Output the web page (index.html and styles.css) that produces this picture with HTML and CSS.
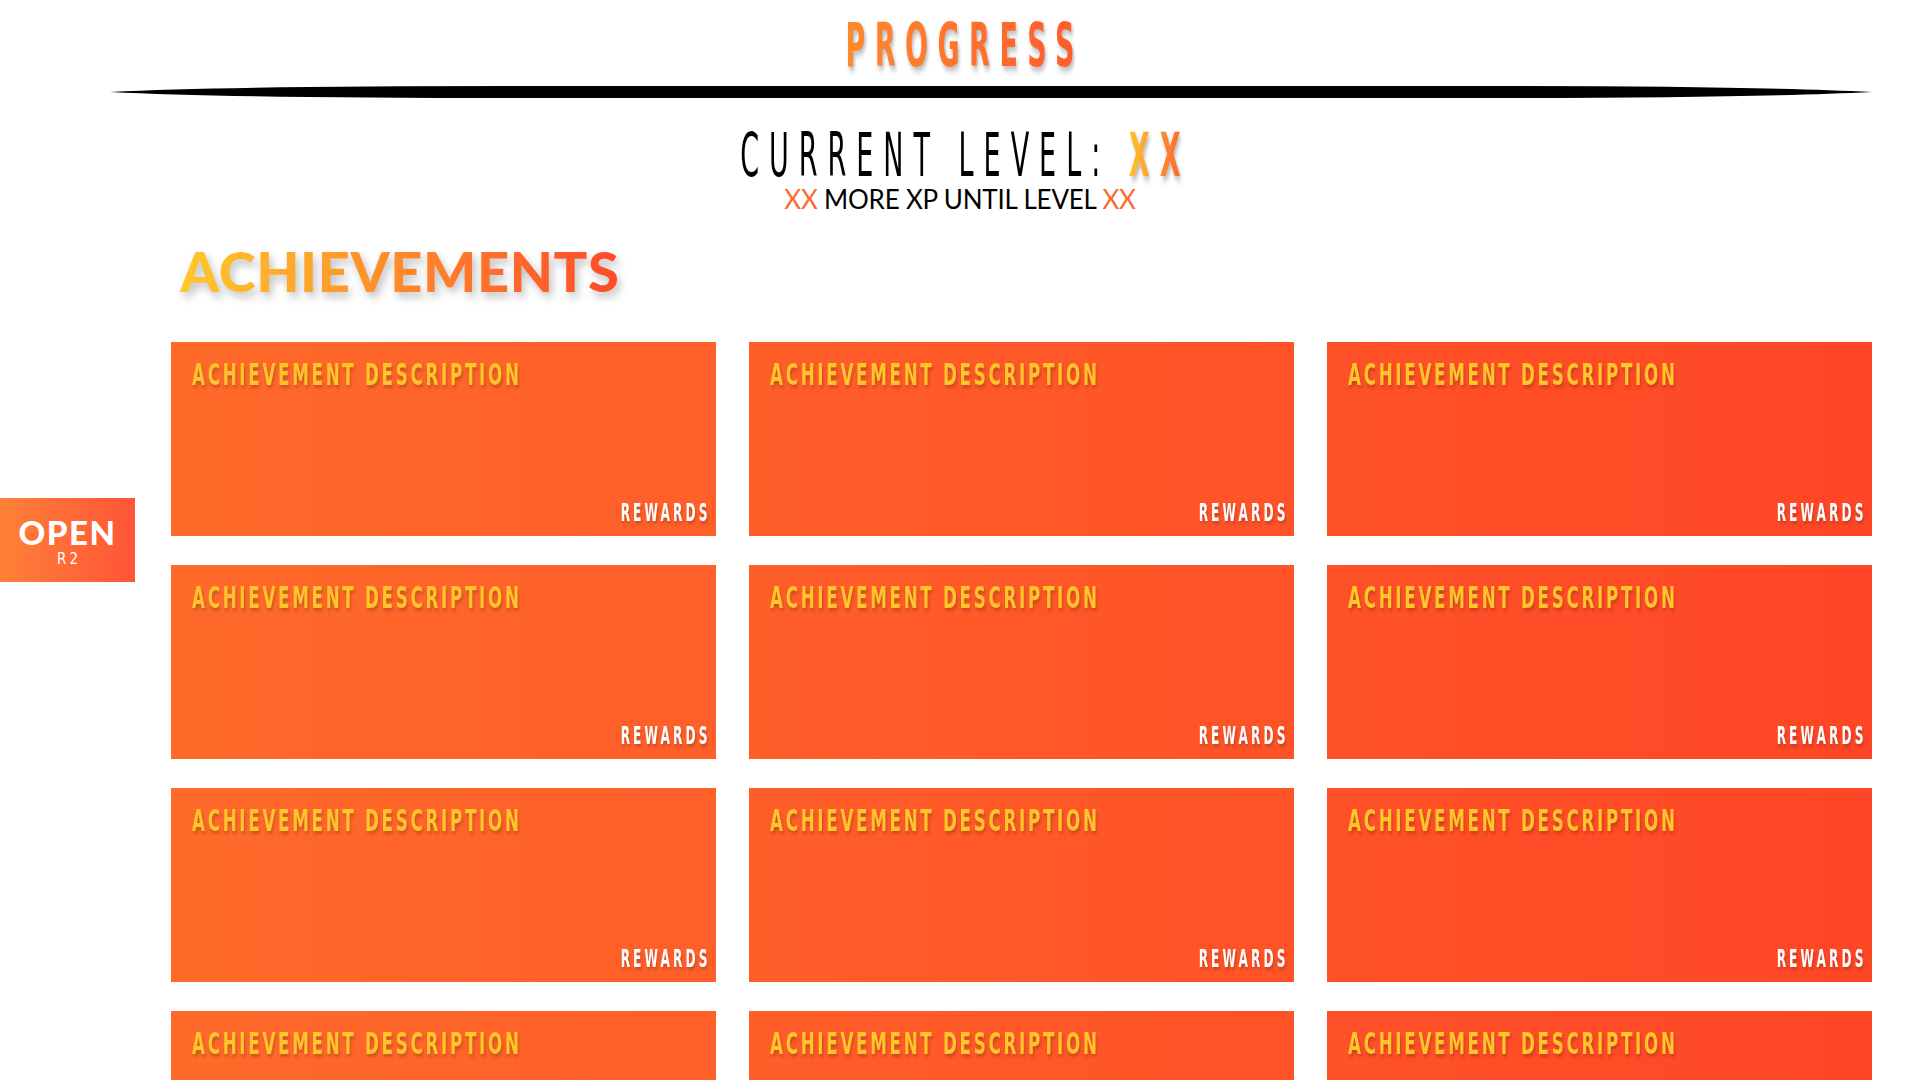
FILE: index.html
```html
<!DOCTYPE html>
<html lang="en">
<head>
<meta charset="utf-8">
<title>Progress</title>
<link rel="stylesheet" href="styles.css">
</head>
<body>
<header class="top">
  <h1 class="title"><span class="title-text">PROGRESS</span></h1>
  <div class="rule">
    <svg class="rule-svg" width="1762" height="12" viewBox="0 0 1762 12" preserveAspectRatio="none">
      <path d="M0 6 Q120 0 400 0 L1362 0 Q1642 0 1762 6 Q1642 12 1362 12 L400 12 Q120 12 0 6 Z" fill="#000"/>
    </svg>
  </div>
  <div class="level"><span class="level-text">CURRENT LEVEL: <span class="level-num">XX</span></span></div>
  <p class="xp"><span class="hl">XX</span> MORE XP UNTIL LEVEL <span class="hl">XX</span></p>
</header>

<section class="ach">
  <h2 class="ach-title">ACHIEVEMENTS</h2>
  <div class="grid">
    <div class="card"><span class="card-desc">ACHIEVEMENT DESCRIPTION</span><span class="card-rew">REWARDS</span></div>
    <div class="card"><span class="card-desc">ACHIEVEMENT DESCRIPTION</span><span class="card-rew">REWARDS</span></div>
    <div class="card"><span class="card-desc">ACHIEVEMENT DESCRIPTION</span><span class="card-rew">REWARDS</span></div>
    <div class="card"><span class="card-desc">ACHIEVEMENT DESCRIPTION</span><span class="card-rew">REWARDS</span></div>
    <div class="card"><span class="card-desc">ACHIEVEMENT DESCRIPTION</span><span class="card-rew">REWARDS</span></div>
    <div class="card"><span class="card-desc">ACHIEVEMENT DESCRIPTION</span><span class="card-rew">REWARDS</span></div>
    <div class="card"><span class="card-desc">ACHIEVEMENT DESCRIPTION</span><span class="card-rew">REWARDS</span></div>
    <div class="card"><span class="card-desc">ACHIEVEMENT DESCRIPTION</span><span class="card-rew">REWARDS</span></div>
    <div class="card"><span class="card-desc">ACHIEVEMENT DESCRIPTION</span><span class="card-rew">REWARDS</span></div>
    <div class="card"><span class="card-desc">ACHIEVEMENT DESCRIPTION</span><span class="card-rew">REWARDS</span></div>
    <div class="card"><span class="card-desc">ACHIEVEMENT DESCRIPTION</span><span class="card-rew">REWARDS</span></div>
    <div class="card"><span class="card-desc">ACHIEVEMENT DESCRIPTION</span><span class="card-rew">REWARDS</span></div>
  </div>
</section>

<div class="open-tab">
  <span class="open-label">OPEN</span>
  <span class="open-key">R2</span>
</div>
</body>
</html>
```

FILE: styles.css
```css
* { box-sizing: border-box; }
html, body { margin: 0; padding: 0; }
body {
  width: 1920px;
  height: 1080px;
  overflow: hidden;
  background: #ffffff;
  font-family: Lato, "Noto Sans", sans-serif;
  position: relative;
}

.top {
  display: flex;
  flex-direction: column;
  align-items: center;
  padding-top: 15px;
}

.title {
  margin: 0;
  height: 60px;
  font: 700 60px/60px "Liberation Sans Narrow", "DejaVu Sans Condensed", sans-serif;
}
.title-text {
  display: inline-block;
  letter-spacing: 19px;
  padding-left: 19px;
  transform: scaleX(0.5);
  background: linear-gradient(90deg, #ff8c2b, #ff5a2c);
  -webkit-background-clip: text;
  background-clip: text;
  color: transparent;
  filter: drop-shadow(3px 4px 3px rgba(0, 0, 0, 0.28));
}

.rule {
  align-self: stretch;
  margin: 11px 48px 0 110px;
  height: 12px;
  display: flex;
}
.rule-svg { display: block; width: 100%; height: 12px; }

.level {
  margin-top: 32px;
  height: 50px;
  font: 400 60px/50px "Liberation Sans Narrow", "DejaVu Sans Condensed", sans-serif;
  color: #000;
}
.level-text {
  display: inline-block;
  white-space: pre;
  letter-spacing: 20px;
  padding-left: 20px;
  transform: scaleX(0.5);
}
.level-num {
  display: inline-block;
  font-weight: 700;
  background: linear-gradient(90deg, #ffc22a, #ff5a2c);
  -webkit-background-clip: text;
  background-clip: text;
  color: transparent;
  filter: drop-shadow(3px 4px 3px rgba(0, 0, 0, 0.28));
}

.xp {
  margin: 6px 0 0;
  height: 26px;
  font: 400 26px/26px Lato, "Noto Sans", sans-serif;
  letter-spacing: -0.2px;
  color: #000;
  white-space: pre;
}
.hl { color: #ff6a2b; }

.ach {
  padding: 0 48px 0 171px;
}
.ach-title {
  margin: 31px 0 0 9px;
  height: 56px;
  width: max-content;
  font: 900 56px/56px Lato, "Noto Sans", sans-serif;
  letter-spacing: 0.6px;
  background: linear-gradient(90deg, #ffc82a, #ff4a2a);
  -webkit-background-clip: text;
  background-clip: text;
  color: transparent;
  filter: drop-shadow(3px 5px 4px rgba(0, 0, 0, 0.25));
}

.grid {
  margin-top: 43px;
  display: grid;
  grid-template-columns: repeat(3, 545px);
  column-gap: 33px;
  row-gap: 29px;
}
.card {
  height: 194px;
  display: flex;
  flex-direction: column;
  justify-content: space-between;
  padding: 17px 11px 11px 21px;
  background: linear-gradient(90deg, #ff6a2a 171px, #ff4626 1872px) fixed;
}
.card-desc {
  align-self: flex-start;
  display: inline-block;
  font: 700 31px/31px "Liberation Sans Narrow", "DejaVu Sans Condensed", sans-serif;
  letter-spacing: 4.5px;
  color: #ffc52b;
  transform: scaleX(0.6);
  transform-origin: left center;
  text-shadow: 2px 3px 4px rgba(0, 0, 0, 0.2);
  white-space: nowrap;
}
.card-rew {
  align-self: flex-end;
  display: inline-block;
  font: 700 25px/25px "Liberation Sans Narrow", "DejaVu Sans Condensed", sans-serif;
  letter-spacing: 5.8px;
  margin-right: -5.8px;
  color: #ffffff;
  transform: scaleX(0.54);
  transform-origin: right center;
  text-shadow: 2px 3px 4px rgba(0, 0, 0, 0.2);
}

.open-tab {
  position: absolute;
  left: 0;
  top: 498px;
  width: 135px;
  height: 84px;
  display: flex;
  flex-direction: column;
  align-items: center;
  padding-top: 18px;
  background: linear-gradient(90deg, #ff8038, #ff5537);
  color: #fff;
}
.open-label {
  font: 900 33px/33px Lato, "Noto Sans", sans-serif;
  letter-spacing: 1.5px;
}
.open-key {
  margin-top: 3px;
  font: 400 15px/15px "Liberation Sans Narrow", "DejaVu Sans Condensed", sans-serif;
  letter-spacing: 3px;
  padding-left: 3px;
}
```
